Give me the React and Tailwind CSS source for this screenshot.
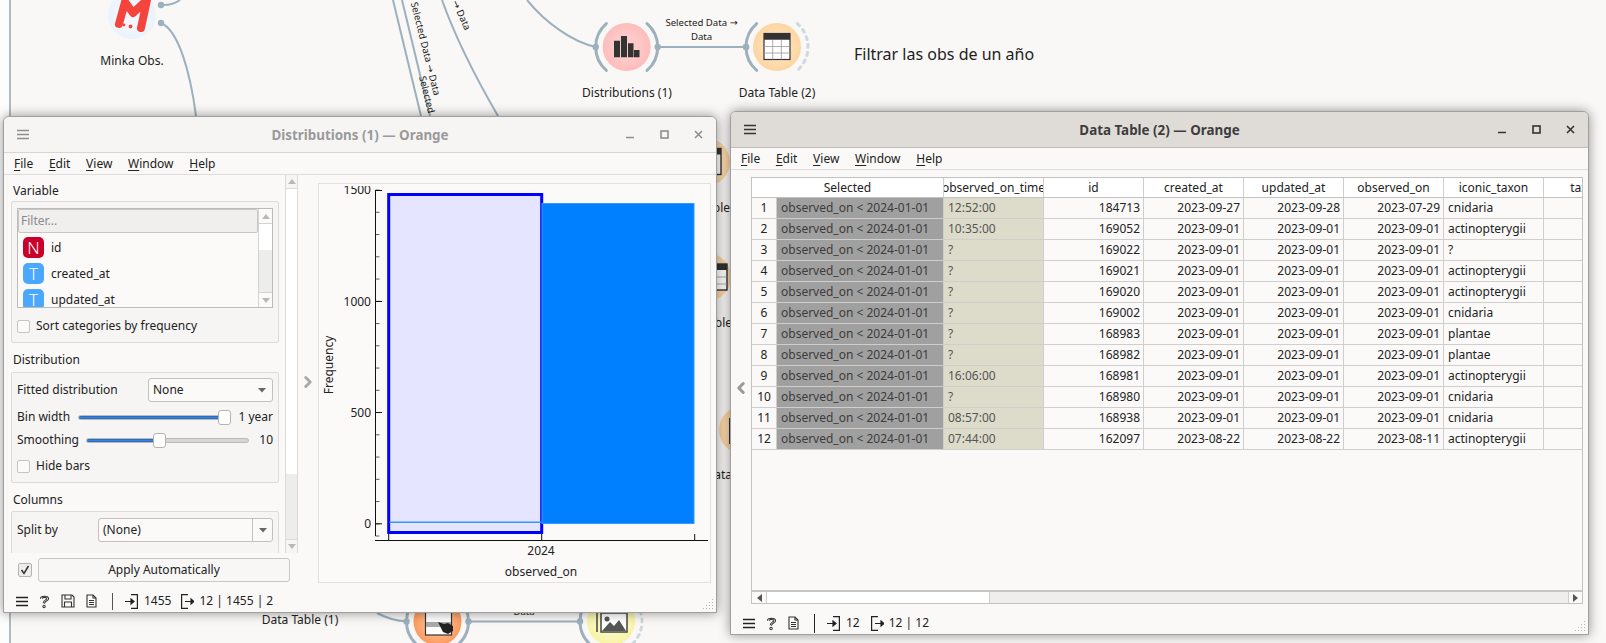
import { ChevronLeft, ChevronRight } from 'lucide-react';

const rows = [
  ['12:52:00', '184713', '2023-09-27', '2023-09-28', '2023-07-29', 'cnidaria'],
  ['10:35:00', '169052', '2023-09-01', '2023-09-01', '2023-09-01', 'actinopterygii'],
  ['?', '169022', '2023-09-01', '2023-09-01', '2023-09-01', '?'],
  ['?', '169021', '2023-09-01', '2023-09-01', '2023-09-01', 'actinopterygii'],
  ['?', '169020', '2023-09-01', '2023-09-01', '2023-09-01', 'actinopterygii'],
  ['?', '169002', '2023-09-01', '2023-09-01', '2023-09-01', 'cnidaria'],
  ['?', '168983', '2023-09-01', '2023-09-01', '2023-09-01', 'plantae'],
  ['?', '168982', '2023-09-01', '2023-09-01', '2023-09-01', 'plantae'],
  ['16:06:00', '168981', '2023-09-01', '2023-09-01', '2023-09-01', 'actinopterygii'],
  ['?', '168980', '2023-09-01', '2023-09-01', '2023-09-01', 'cnidaria'],
  ['08:57:00', '168938', '2023-09-01', '2023-09-01', '2023-09-01', 'cnidaria'],
  ['07:44:00', '162097', '2023-08-22', '2023-08-22', '2023-08-11', 'actinopterygii'],
];

function polar(cx, cy, r, deg) {
  const a = (deg * Math.PI) / 180;
  return [cx + r * Math.cos(a), cy + r * Math.sin(a)];
}

function Arc({ cx, cy, r = 31, from, to, dashed }) {
  const [x1, y1] = polar(cx, cy, r, from);
  const [x2, y2] = polar(cx, cy, r, to);
  return (
    <path
      d={`M${x1} ${y1}A${r} ${r} 0 0 1 ${x2} ${y2}`}
      fill="none"
      stroke={dashed ? '#ced8de' : '#9cb0bd'}
      strokeWidth="3"
      strokeLinecap="round"
      strokeDasharray={dashed ? '3 5' : undefined}
    />
  );
}

function Node({ cx, cy, r = 24, grad, left = true, right = true, dashedRight }) {
  return (
    <g>
      <circle cx={cx} cy={cy} r={r} fill={`url(#${grad})`} />
      {left && <Arc cx={cx} cy={cy} from={131} to={229} />}
      {left && <circle cx={cx - 31} cy={cy} r="3.2" fill="#9cb0bd" />}
      {right && <Arc cx={cx} cy={cy} from={-49} to={49} />}
      {right && <circle cx={cx + 31} cy={cy} r="3.2" fill="#9cb0bd" />}
      {dashedRight && <Arc cx={cx} cy={cy} from={-49} to={49} dashed />}
    </g>
  );
}

function TableIcon({ x, y, w = 26, h = 26 }) {
  return (
    <g>
      <rect x={x} y={y} width={w} height={h} fill="#fff" stroke="#333" strokeWidth="1.2" />
      <rect x={x} y={y} width={w} height={h * 0.24} fill="#333" />
      <path
        d={`M${x + w / 3} ${y + h * 0.24}V${y + h}M${x + (2 * w) / 3} ${y + h * 0.24}V${y + h}M${x} ${y + h * 0.5}H${x + w}M${x} ${y + h * 0.75}H${x + w}`}
        stroke="#999"
        strokeWidth="0.8"
      />
    </g>
  );
}

const Arrow = () => <tspan fontFamily="DejaVu Sans">→</tspan>;

function Canvas() {
  return (
    <svg className="absolute top-0 left-0" width="1606" height="643" style={{ fontFamily: 'Noto Sans, sans-serif' }} fill="#222">
      <defs>
        <radialGradient id="pink"><stop offset="0.5" stopColor="#ffc9c9" /><stop offset="1" stopColor="#ffbcbc" /></radialGradient>
        <radialGradient id="peach"><stop offset="0.5" stopColor="#fde0b8" /><stop offset="1" stopColor="#fdd5a0" /></radialGradient>
        <radialGradient id="orange"><stop offset="0.4" stopColor="#ffb98e" /><stop offset="1" stopColor="#fc9a5e" /></radialGradient>
        <radialGradient id="yellow"><stop offset="0.5" stopColor="#fbf8c0" /><stop offset="1" stopColor="#f8f3a6" /></radialGradient>
        <radialGradient id="blue"><stop offset="0.5" stopColor="#f1f7fc" /><stop offset="1" stopColor="#eaf3fb" /></radialGradient>
      </defs>

      <rect x="9" y="0" width="2" height="643" fill="#b2bbc0" />
      <rect x="0" y="0" width="9" height="643" fill="#fdfdfd" />

      {/* links */}
      <g fill="none" stroke="#9cb0bd" strokeWidth="2">
        <path d="M161 23C178 30 190 70 196 116" />
        <path d="M163 5C170 5 176 3 180 0" />
        <path d="M393 0L421 116" />
        <path d="M402 0L430 116" />
        <path d="M442 0C458 45 480 85 498 116" />
        <path d="M527 0C545 22 572 42 596 47" />
        <path d="M658 47H746" />
        <path d="M377 613C388 619 398 621 407 621.5" />
        <path d="M468 621.5H579" />
      </g>

      {/* link labels */}
      <g fontSize="9.6">
        <text x="434" y="96" textAnchor="end" transform="rotate(76 434 96)">Selected Data <Arrow /> Data</text>
        <text x="419" y="77" transform="rotate(76 419 77)">Selected</text>
        <text x="465" y="31" textAnchor="end" transform="rotate(66 465 31)"><Arrow /> Data</text>
        <text x="701.5" y="26" textAnchor="middle">Selected Data <Arrow /></text>
        <text x="701.5" y="40" textAnchor="middle">Data</text>
        <text x="524" y="615" textAnchor="middle">Data</text>
      </g>

      {/* minka */}
      <circle cx="132" cy="15" r="24" fill="url(#blue)" />
      <path d="M119 24L125 2L133 13L147 0L141 28" fill="none" stroke="#f5443b" strokeWidth="8" strokeLinecap="round" strokeLinejoin="round" />
      <circle cx="124" cy="25" r="1.4" fill="#f5443b" />
      <circle cx="130.5" cy="26.5" r="1.9" fill="#f5443b" />
      <Arc cx="132" cy="15" from={-49} to={44} />
      <circle cx="161" cy="5" r="3.2" fill="#9cb0bd" />
      <circle cx="161" cy="23" r="3.2" fill="#9cb0bd" />
      <text x="132" y="65" textAnchor="middle" fontSize="12">Minka Obs.</text>

      {/* distributions */}
      <Node cx={626.7} cy={47} grad="pink" />
      <path d="M614 40.7h6v16.6h-6zM621 36h6v21.3h-6zM628 43.3h5.500v14h-5.500zM634 50h5.500v7.300h-5.500z" fill="#333" />
      <text x="627" y="97" textAnchor="middle" fontSize="12">Distributions (1)</text>

      {/* data table 2 */}
      <Node cx={777} cy={47} grad="peach" right={false} dashedRight />
      <circle cx="746" cy="47" r="3.2" fill="#9cb0bd" />
      <TableIcon x={764} y={33.5} />
      <text x="777" y="97" textAnchor="middle" fontSize="12">Data Table (2)</text>

      <text x="854" y="60" fontSize="16">Filtrar las obs de un año</text>

      {/* nodes hidden behind the windows */}
      <circle cx="706" cy="162" r="24" fill="url(#peach)" />
      <rect x="695" y="148.5" width="26" height="26" fill="#fff" stroke="#333" strokeWidth="1.4" />
      <rect x="695" y="148.5" width="26" height="6" fill="#333" />
      <text x="730" y="212" textAnchor="end" fontSize="12">ble</text>
      <circle cx="707" cy="277" r="24" fill="url(#peach)" />
      <rect x="700" y="264" width="27" height="26" fill="#fff" stroke="#333" strokeWidth="1.4" />
      <rect x="700" y="264" width="27" height="6" fill="#333" />
      <path d="M700 277H727M700 284H727" stroke="#999" strokeWidth="0.8" />
      <text x="732" y="327" textAnchor="end" fontSize="12">ble</text>
      <circle cx="743" cy="430" r="24" fill="url(#peach)" />
      <rect x="729" y="418" width="2" height="26" fill="#333" />
      <Arc cx="743" cy="430" from={131} to={229} />
      <text x="732" y="479" textAnchor="end" fontSize="12">ata</text>

      {/* bottom row */}
      <text x="300" y="624" textAnchor="middle" fontSize="12">Data Table (1)</text>
      <Node cx={437.5} cy={621.5} grad="orange" />
      <rect x="425.5" y="603" width="26" height="32" fill="#fff" stroke="#333" strokeWidth="1.2" />
      <rect x="426" y="622" width="25" height="5" fill="#aaa" />
      <path d="M438 622L444 624L448 623L453 626L453 631L448 634L443 632Z" fill="#222" />
      <Node cx={611} cy={621.5} grad="yellow" right={false} dashedRight />
      <path d="M597 612V632" stroke="#444" strokeWidth="1.5" />
      <rect x="601" y="613" width="26" height="19" fill="#fff" stroke="#444" strokeWidth="1.5" />
      <path d="M602 631L610 622L614 626L619 620L626 631Z" fill="#555" />
      <circle cx="607" cy="619" r="2.5" fill="#555" />
    </svg>
  );
}

function WindowButtons({ tone }) {
  return (
    <div className="w-[110px] flex items-center justify-end gap-[25px] pr-[13px]" style={{ color: tone }}>
      <svg width="9" height="9" viewBox="0 0 9 9"><path d="M0 7.5H8" stroke="currentColor" strokeWidth="1.5" /></svg>
      <svg width="9" height="9" viewBox="0 0 9 9"><rect x="1" y="1" width="7" height="7" fill="none" stroke="currentColor" strokeWidth="1.6" /></svg>
      <svg width="9" height="9" viewBox="0 0 9 9"><path d="M1 1L8 8M8 1L1 8" stroke="currentColor" strokeWidth="1.6" /></svg>
    </div>
  );
}

function Hamburger({ tone, thick }) {
  return (
    <svg width="12" height="11" viewBox="0 0 12 11">
      <path d="M0 1.5H12M0 5.5H12M0 9.5H12" stroke={tone} strokeWidth={thick ? 1.6 : 1.3} />
    </svg>
  );
}

function TitleBar({ title, active }) {
  return (
    <div className={`h-[36px] flex items-center pl-[13px] border-b shrink-0 rounded-t-[5px] ${active ? 'bg-[#dfdcd8] border-[#c2bfbb]' : 'bg-[#f6f5f4] border-[#d8d6d3]'}`}>
      <div className="w-[97px]"><Hamburger tone={active ? '#333' : '#8f8f8f'} /></div>
      <span className={`flex-1 text-center pt-px font-bold text-[13.4px] ${active ? 'text-[#3d3d3d]' : 'text-[#9a9a9a]'}`}>{title}</span>
      <WindowButtons tone={active ? '#333' : '#8f8f8f'} />
    </div>
  );
}

function MenuBar() {
  const items = [['F', 'ile'], ['E', 'dit'], ['V', 'iew'], ['W', 'indow'], ['H', 'elp']];
  return (
    <div className="h-[22px] flex items-center gap-[15.7px] border-b border-[#dfdddb] shrink-0 pl-[10px]">
      {items.map(([a, b]) => (
        <span key={a}><span className="underline underline-offset-2">{a}</span>{b}</span>
      ))}
    </div>
  );
}

function StatusIcons({ save }) {
  return (
    <>
      <Hamburger tone="#222" thick />
      <svg width="11" height="15" viewBox="0 0 12 15" fill="none" stroke="#333" strokeWidth="1.1">
        <path d="M1.5 4.5C1.5 1 10.5 0.5 10.5 4.5C10.5 7 6 6.5 6 10" />
        <path d="M3.5 4.5C3.5 2.5 8.5 2.5 8.5 4.5C8.5 5.5 4.5 6 4.5 9.5" />
        <circle cx="5.5" cy="13" r="1.3" />
      </svg>
      {save && (
        <svg width="14" height="14" viewBox="0 0 14 14" fill="none" stroke="#333" strokeWidth="1.1">
          <path d="M1 1H11L13 3V13H1Z" />
          <path d="M4 1V5H10V1M3.5 13V8H10.5V13" />
        </svg>
      )}
      <svg width="11" height="14" viewBox="0 0 11 14" fill="none" stroke="#333" strokeWidth="1.1">
        <path d="M1 1H7L10 4V13H1Z" />
        <path d="M7 1V4H10M3 6.5H8M3 8.5H8M3 10.5H8" />
      </svg>
    </>
  );
}

function InIcon() {
  return (
    <svg width="13" height="15" viewBox="0 0 13 15" fill="none" stroke="#222" strokeWidth="1.2">
      <path d="M6 0.6H12.4V14.4H6M0 7.5H8" />
      <path d="M6 5L9 7.5L6 10Z" fill="#222" />
    </svg>
  );
}

function OutIcon() {
  return (
    <svg width="13" height="15" viewBox="0 0 13 15" fill="none" stroke="#222" strokeWidth="1.2">
      <path d="M7 0.6H0.6V14.4H7M4 7.5H10" />
      <path d="M10 5L13 7.5L10 10Z" fill="#222" />
    </svg>
  );
}

function SizeGrip() {
  const dots = [[10, 0], [7, 3], [10, 3], [4, 6], [7, 6], [10, 6], [1, 9], [4, 9], [7, 9], [10, 9]];
  return (
    <svg className="absolute right-[2px] bottom-[2px]" width="12" height="11" viewBox="0 0 12 11">
      {dots.map(([x, y]) => <rect key={`${x}-${y}`} x={x} y={y} width="1" height="1" fill="#b5b3b1" />)}
    </svg>
  );
}

function CheckBox({ checked }) {
  return (
    <span className={`border rounded-[2px] flex items-center justify-center shrink-0 ${checked ? 'w-[14px] h-[14px] border-[#b5b3b1] bg-[#eeedec]' : 'w-[13px] h-[13px] border-[#c6c4c2] bg-[#fbfaf9]'}`}>
      {checked && (
        <svg width="10" height="10" viewBox="0 0 10 10"><path d="M1.5 5L4 8.5L8.5 1" fill="none" stroke="#333" strokeWidth="1.5" /></svg>
      )}
    </span>
  );
}

function Caret() {
  return <svg width="8" height="5" viewBox="0 0 8 5"><path d="M0 0H8L4 4.5Z" fill="#666" /></svg>;
}

function Combo({ className, label, split }) {
  return (
    <div className={`h-[24px] flex items-center border border-[#c3c1bf] rounded-[3px] bg-[#fbfaf9] pl-[4px] ${className}`}>
      <span className="flex-1">{label}</span>
      <span className={`w-[20px] h-full flex items-center justify-center ${split ? 'border-l border-[#c3c1bf]' : ''}`}>
        <Caret />
      </span>
    </div>
  );
}

function Slider({ label, value, labelWidth, valueWidth, pct }) {
  return (
    <div className="h-[16px] flex items-center">
      <span className={`shrink-0 ${labelWidth}`}>{label}</span>
      <div className="relative flex-1 h-[5px] rounded-full bg-[#d8d6d4] border border-[#bcbab8]">
        <div className="h-full rounded-full bg-[#3584e4] border-y border-[#2a6cbd]" style={{ width: `${pct}%` }} />
        <span className="absolute top-[-6px] w-[13px] h-[15px] bg-white border border-[#b5b3b1] rounded-[3px]" style={{ left: `calc(${pct}% - 6px)` }} />
      </div>
      <span className={`shrink-0 text-right ${valueWidth}`}>{value}</span>
    </div>
  );
}

function VarIcon({ letter, color }) {
  return (
    <span className={`w-[21px] h-[21px] rounded-[5px] text-white flex items-center justify-center text-[17px] font-light shrink-0 ${color}`}>{letter}</span>
  );
}

function VariableList() {
  return (
    <div className="h-[100px] border border-[#bdbbb9] flex bg-[#fbfaf9]">
      <div className="flex-1 overflow-hidden">
        <div className="h-[24px] bg-[#f0efee] border border-[#c9c7c5] rounded-[2px] px-[2px] flex items-center text-[#8a8a8a]">Filter...</div>
        <div className="pl-[5px] pt-[4px] flex flex-col gap-[5px]">
          <div className="flex items-center gap-[7px]"><VarIcon letter="N" color="bg-[#c8002b]" />id</div>
          <div className="flex items-center gap-[7px]"><VarIcon letter="T" color="bg-[#4aa8ff]" />created_at</div>
          <div className="flex items-center gap-[7px]"><VarIcon letter="T" color="bg-[#4aa8ff]" />updated_at</div>
        </div>
      </div>
      <div className="w-[14px] border-l border-[#d5d3d1] flex flex-col">
        <div className="h-[15px] flex items-center justify-center border-b border-[#d5d3d1]">
          <svg width="8" height="5" viewBox="0 0 8 5"><path d="M0 5H8L4 0Z" fill="#b8b8b8" /></svg>
        </div>
        <div className="h-[26px] bg-white" />
        <div className="flex-1 bg-[#ededec]" />
        <div className="h-[15px] flex items-center justify-center border-t border-[#d5d3d1]">
          <svg width="8" height="5" viewBox="0 0 8 5"><path d="M0 0H8L4 5Z" fill="#b8b8b8" /></svg>
        </div>
      </div>
    </div>
  );
}

function ControlPanel() {
  return (
    <div className="h-[378px] flex overflow-hidden">
      <div className="w-[281px] shrink-0 pl-[7px] pr-[5px] overflow-hidden">
        <div className="w-[268px]">
          <div className="h-[18px] mt-[7px] pl-[2px] leading-[18px]">Variable</div>
          <div className="h-[142px] mt-[1px] border border-[#dddbd9] rounded-[2px] bg-[#f6f5f4] px-[5px] pt-[6px]">
            <VariableList />
            <div className="h-[18px] mt-[9px] flex items-center gap-[6px]"><CheckBox />Sort categories by frequency</div>
          </div>
          <div className="h-[18px] mt-[8px] pl-[2px] leading-[18px]">Distribution</div>
          <div className="h-[111px] mt-[3px] border border-[#dddbd9] rounded-[2px] bg-[#f6f5f4] px-[5px] pt-[5px]">
            <div className="flex items-center">
              <span className="w-[131px] shrink-0">Fitted distribution</span>
              <Combo className="flex-1" label="None" />
            </div>
            <div className="mt-[7px]"><Slider label="Bin width" value="1 year" labelWidth="w-[61px]" valueWidth="w-[42px]" pct={96} /></div>
            <div className="mt-[7px]"><Slider label="Smoothing" value="10" labelWidth="w-[69px]" valueWidth="w-[24px]" pct={45} /></div>
            <div className="h-[18px] mt-[9px] flex items-center gap-[6px]"><CheckBox />Hide bars</div>
          </div>
          <div className="h-[18px] mt-[8px] pl-[2px] leading-[18px]">Columns</div>
          <div className="h-[70px] mt-[2px] border border-[#dddbd9] rounded-[2px] bg-[#f6f5f4] px-[5px] pt-[6px]">
            <div className="flex items-center">
              <span className="w-[81px] shrink-0">Split by</span>
              <Combo className="flex-1" label="(None)" split />
            </div>
            <div className="mt-[12px]"><CheckBox /></div>
          </div>
        </div>
      </div>
      <div className="w-[13px] border-x border-[#dcdad8] flex flex-col bg-white">
        <div className="h-[14px] bg-[#f6f5f4] border-b border-[#dcdad8] flex items-center justify-center">
          <svg width="8" height="5" viewBox="0 0 8 5"><path d="M0 5H8L4 0Z" fill="#b8b8b8" /></svg>
        </div>
        <div className="h-[285px]" />
        <div className="flex-1 bg-[#ededec]" />
        <div className="h-[14px] bg-[#f6f5f4] border-t border-[#dcdad8] flex items-center justify-center">
          <svg width="8" height="5" viewBox="0 0 8 5"><path d="M0 0H8L4 5Z" fill="#b8b8b8" /></svg>
        </div>
      </div>
    </div>
  );
}

function Chart() {
  const minors = [];
  for (let i = 0; i <= 15; i++) minors.push(523.8 - i * 22.25);
  return (
    <svg width="393" height="400" viewBox="318 183 393 400" style={{ fontFamily: 'Noto Sans, sans-serif' }} fontSize="12" fill="#222">
      <clipPath id="plot-clip"><rect x="318" y="186" width="393" height="397" /></clipPath>
      <path d="M375.5 190V536" stroke="#111" strokeWidth="1" />
      {minors.map((y) => <path key={y} d={`M375.5 ${y}H379.5`} stroke="#333" strokeWidth="0.8" />)}
      <path d="M375.5 536H379.5" stroke="#333" strokeWidth="0.8" />
      {[190.5, 301.5, 412.5, 523.8].map((y) => <path key={y} d={`M375.5 ${y}H382`} stroke="#111" />)}
      <g clipPath="url(#plot-clip)">
        <text x="371" y="194" textAnchor="end">1500</text>
      </g>
      <text x="371" y="305.5" textAnchor="end">1000</text>
      <text x="371" y="416.5" textAnchor="end">500</text>
      <text x="371" y="528" textAnchor="end">0</text>
      <text x="0" y="0" textAnchor="middle" transform="translate(333 365) rotate(-90)">Frequency</text>

      <rect x="388.7" y="194.5" width="153" height="338" fill="#e5e5ff" stroke="#0000ff" strokeWidth="3" />
      <rect x="389.5" y="521.5" width="152" height="1.5" fill="#2f97ff" />
      <rect x="542" y="203.5" width="152" height="320" fill="#0080ff" stroke="#3399ff" strokeWidth="1" />

      <path d="M375 540.5H708" stroke="#111" />
      <path d="M388.7 540V534M541.7 540V534M694.7 540V534" stroke="#111" />
      <text x="541" y="554.5" textAnchor="middle">2024</text>
      <text x="541" y="576" textAnchor="middle">observed_on</text>
    </svg>
  );
}

function DistributionsWindow() {
  return (
    <div className="absolute left-[3px] top-[116px] w-[714px] h-[497px] flex flex-col bg-[#faf9f7] border border-[#9f9f9f] rounded-t-[6px] shadow-[0_0_12px_rgba(0,0,0,0.42)]">
      <TitleBar title="Distributions (1) — Orange" />
      <MenuBar />
      <div className="h-[411px] flex shrink-0">
        <div className="w-[294px] shrink-0 flex flex-col">
          <ControlPanel />
          <div className="flex items-center pl-[14px] mt-[5px]">
            <CheckBox checked />
            <button className="ml-[6px] w-[252px] h-[24px] border border-[#c9c7c5] rounded-[3px] bg-[#f8f7f6]">Apply Automatically</button>
          </div>
        </div>
        <div className="w-[20px] shrink-0 flex items-center justify-center pt-[3px]">
          <ChevronRight size={18} strokeWidth={4} className="text-[#aaa]" />
        </div>
        <div className="mt-[8px] h-[400px] w-[393px] border border-[#e3e1df] bg-[#fbfaf9] overflow-hidden shrink-0">
          <div className="-m-px"><Chart /></div>
        </div>
      </div>
      <div className="flex-1 flex items-center pl-[12px] pt-[4px]">
        <div className="flex items-center gap-[11px] pr-[15px] border-r border-[#555] h-[17px]"><StatusIcons save /></div>
        <div className="flex items-center gap-[6px] pl-[12px]"><InIcon />1455</div>
        <div className="flex items-center gap-[5px] pl-[10px]"><OutIcon />12 | 1455 | 2</div>
      </div>
      <SizeGrip />
    </div>
  );
}

function HeaderCell({ children, className }) {
  return (
    <div className={`h-full flex items-center justify-center overflow-hidden whitespace-nowrap border-r border-[#d0cecc] shrink-0 ${className}`}>
      <span className="shrink-0">{children}</span>
    </div>
  );
}

function DataTable() {
  return (
    <div className="h-[427px] border border-[#c4c2c0] flex flex-col overflow-hidden flex-1">
      <div className="h-[20px] flex bg-white border-b border-[#c4c2c0] shrink-0">
        <HeaderCell className="w-[192px]">Selected</HeaderCell>
        <HeaderCell className="w-[100px]">observed_on_time</HeaderCell>
        <HeaderCell className="w-[100px]">id</HeaderCell>
        <HeaderCell className="w-[100px]">created_at</HeaderCell>
        <HeaderCell className="w-[100px]">updated_at</HeaderCell>
        <HeaderCell className="w-[100px]">observed_on</HeaderCell>
        <HeaderCell className="w-[100px]">iconic_taxon</HeaderCell>
        <HeaderCell className="w-[100px] border-r-0">taxon_id</HeaderCell>
      </div>
      {rows.map((r, i) => (
        <div key={i} className="h-[21px] flex border-b border-[#d0cecc] shrink-0">
          <div className="w-[25px] bg-[#faf9f8] border-r border-[#d0cecc] flex items-center justify-center shrink-0">{i + 1}</div>
          <div className="w-[167px] bg-[#a0a0a0] text-[#3c3c3c] pl-[4px] border-r border-[#d0cecc] flex items-center shrink-0 whitespace-nowrap">observed_on &lt; 2024-01-01</div>
          <div className="w-[100px] bg-[#dddccb] text-[#555] pl-[4px] border-r border-[#d0cecc] flex items-center shrink-0">{r[0]}</div>
          {r.slice(1, 5).map((v, k) => (
            <div key={k} className="w-[100px] bg-[#fbfaf9] pr-[3px] border-r border-[#d0cecc] flex items-center justify-end shrink-0">{v}</div>
          ))}
          <div className="w-[100px] bg-[#fbfaf9] pl-[4px] border-r border-[#d0cecc] flex items-center shrink-0">{r[5]}</div>
          <div className="flex-1 bg-[#fbfaf9]" />
        </div>
      ))}
      <div className="flex-1" />
      <div className="h-[13px] flex items-center border-t-2 border-[#c8c6c4] bg-[#efeeed] shrink-0">
        <div className="w-[15px] h-full bg-[#fbfaf9] border-r border-[#d0cecc] flex items-center justify-center">
          <svg width="5" height="8" viewBox="0 0 5 8"><path d="M5 0V8L0 4Z" fill="#555" /></svg>
        </div>
        <div className="w-[223px] h-full bg-white border-r border-[#d0cecc]" />
        <div className="flex-1" />
        <div className="w-[14px] h-full bg-[#fbfaf9] border-l border-[#d0cecc] flex items-center justify-center">
          <svg width="5" height="8" viewBox="0 0 5 8"><path d="M0 0V8L5 4Z" fill="#555" /></svg>
        </div>
      </div>
    </div>
  );
}

function DataTableWindow() {
  return (
    <div className="absolute left-[730px] top-[111px] w-[859px] h-[524px] flex flex-col bg-[#faf9f7] border border-[#9f9f9f] rounded-t-[6px] shadow-[0_0_12px_rgba(0,0,0,0.42)]">
      <TitleBar title="Data Table (2) — Orange" active />
      <MenuBar />
      <div className="flex pr-[5px] pt-[7px] shrink-0">
        <div className="w-[20px] h-[427px] flex items-center justify-center shrink-0">
          <ChevronLeft size={18} strokeWidth={4} className="text-[#999] -translate-y-[3px]" />
        </div>
        <DataTable />
      </div>
      <div className="flex-1 flex items-center pl-[12px] pt-[8px]">
        <div className="flex items-center gap-[11px] pr-[15px] border-r border-[#222] h-[19px]"><StatusIcons /></div>
        <div className="flex items-center gap-[6px] pl-[12px]"><InIcon />12</div>
        <div className="flex items-center gap-[5px] pl-[11px]"><OutIcon />12 | 12</div>
      </div>
      <SizeGrip />
    </div>
  );
}

export default function App() {
  return (
    <div className="relative w-[1606px] h-[643px] overflow-hidden bg-[#f9f8f6] font-['Noto_Sans',sans-serif] text-[12px] text-[#222]">
      <Canvas />
      <DistributionsWindow />
      <DataTableWindow />
    </div>
  );
}
